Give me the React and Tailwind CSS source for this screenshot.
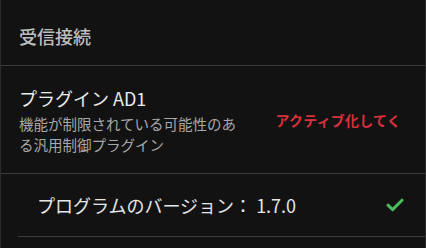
export default function App() {
  return (
    <div
      className="w-[426px] h-[248px] bg-[#121212] border-x border-[#2c2c2c] overflow-hidden"
      style={{ fontFamily: '"Noto Sans CJK JP", "Noto Sans", sans-serif' }}
    >
      {/* Section header */}
      <div className="h-[66px] flex items-center px-[18px] pt-[6px] border-b border-[#3c3c3c]">
        <h2 className="text-[18px] font-medium text-[#bdbdbd] leading-none">受信接続</h2>
      </div>

      {/* Plugin row */}
      <div className="h-[108px] flex items-start pl-[18px] pr-[24px] pt-[19px] border-b border-[#3c3c3c]">
        <div className="w-[222px]">
          <p className="text-[18px] text-[#ececec] leading-[26px]">プラグイン AD1</p>
          <p className="text-[14.5px] text-[#a8a8a8] leading-[21px] mt-[2px]">
            機能が制限されている可能性のある汎用制御プラグイン
          </p>
        </div>
        <div className="ml-auto pt-[22px]">
          <span className="text-[14px] font-bold text-[#d8303c] leading-none tracking-[0.2px]">アクティブ化してく</span>
        </div>
      </div>

      {/* Version row */}
      <div className="ml-[17px] h-[63px] flex items-center pl-[19px] pr-[21px] border-b border-[#3c3c3c]">
        <span className="text-[18px] text-[#e6e6e6]">プログラムのバージョン： 1.7.0</span>
        <svg width="18" height="14" viewBox="0 0 18 14" className="ml-auto" fill="none">
          <path d="M2 7.2 L6.6 11.6 L16 2.2" stroke="#4cbb5c" strokeWidth="3" strokeLinecap="round" strokeLinejoin="round" />
        </svg>
      </div>
    </div>
  )
}
